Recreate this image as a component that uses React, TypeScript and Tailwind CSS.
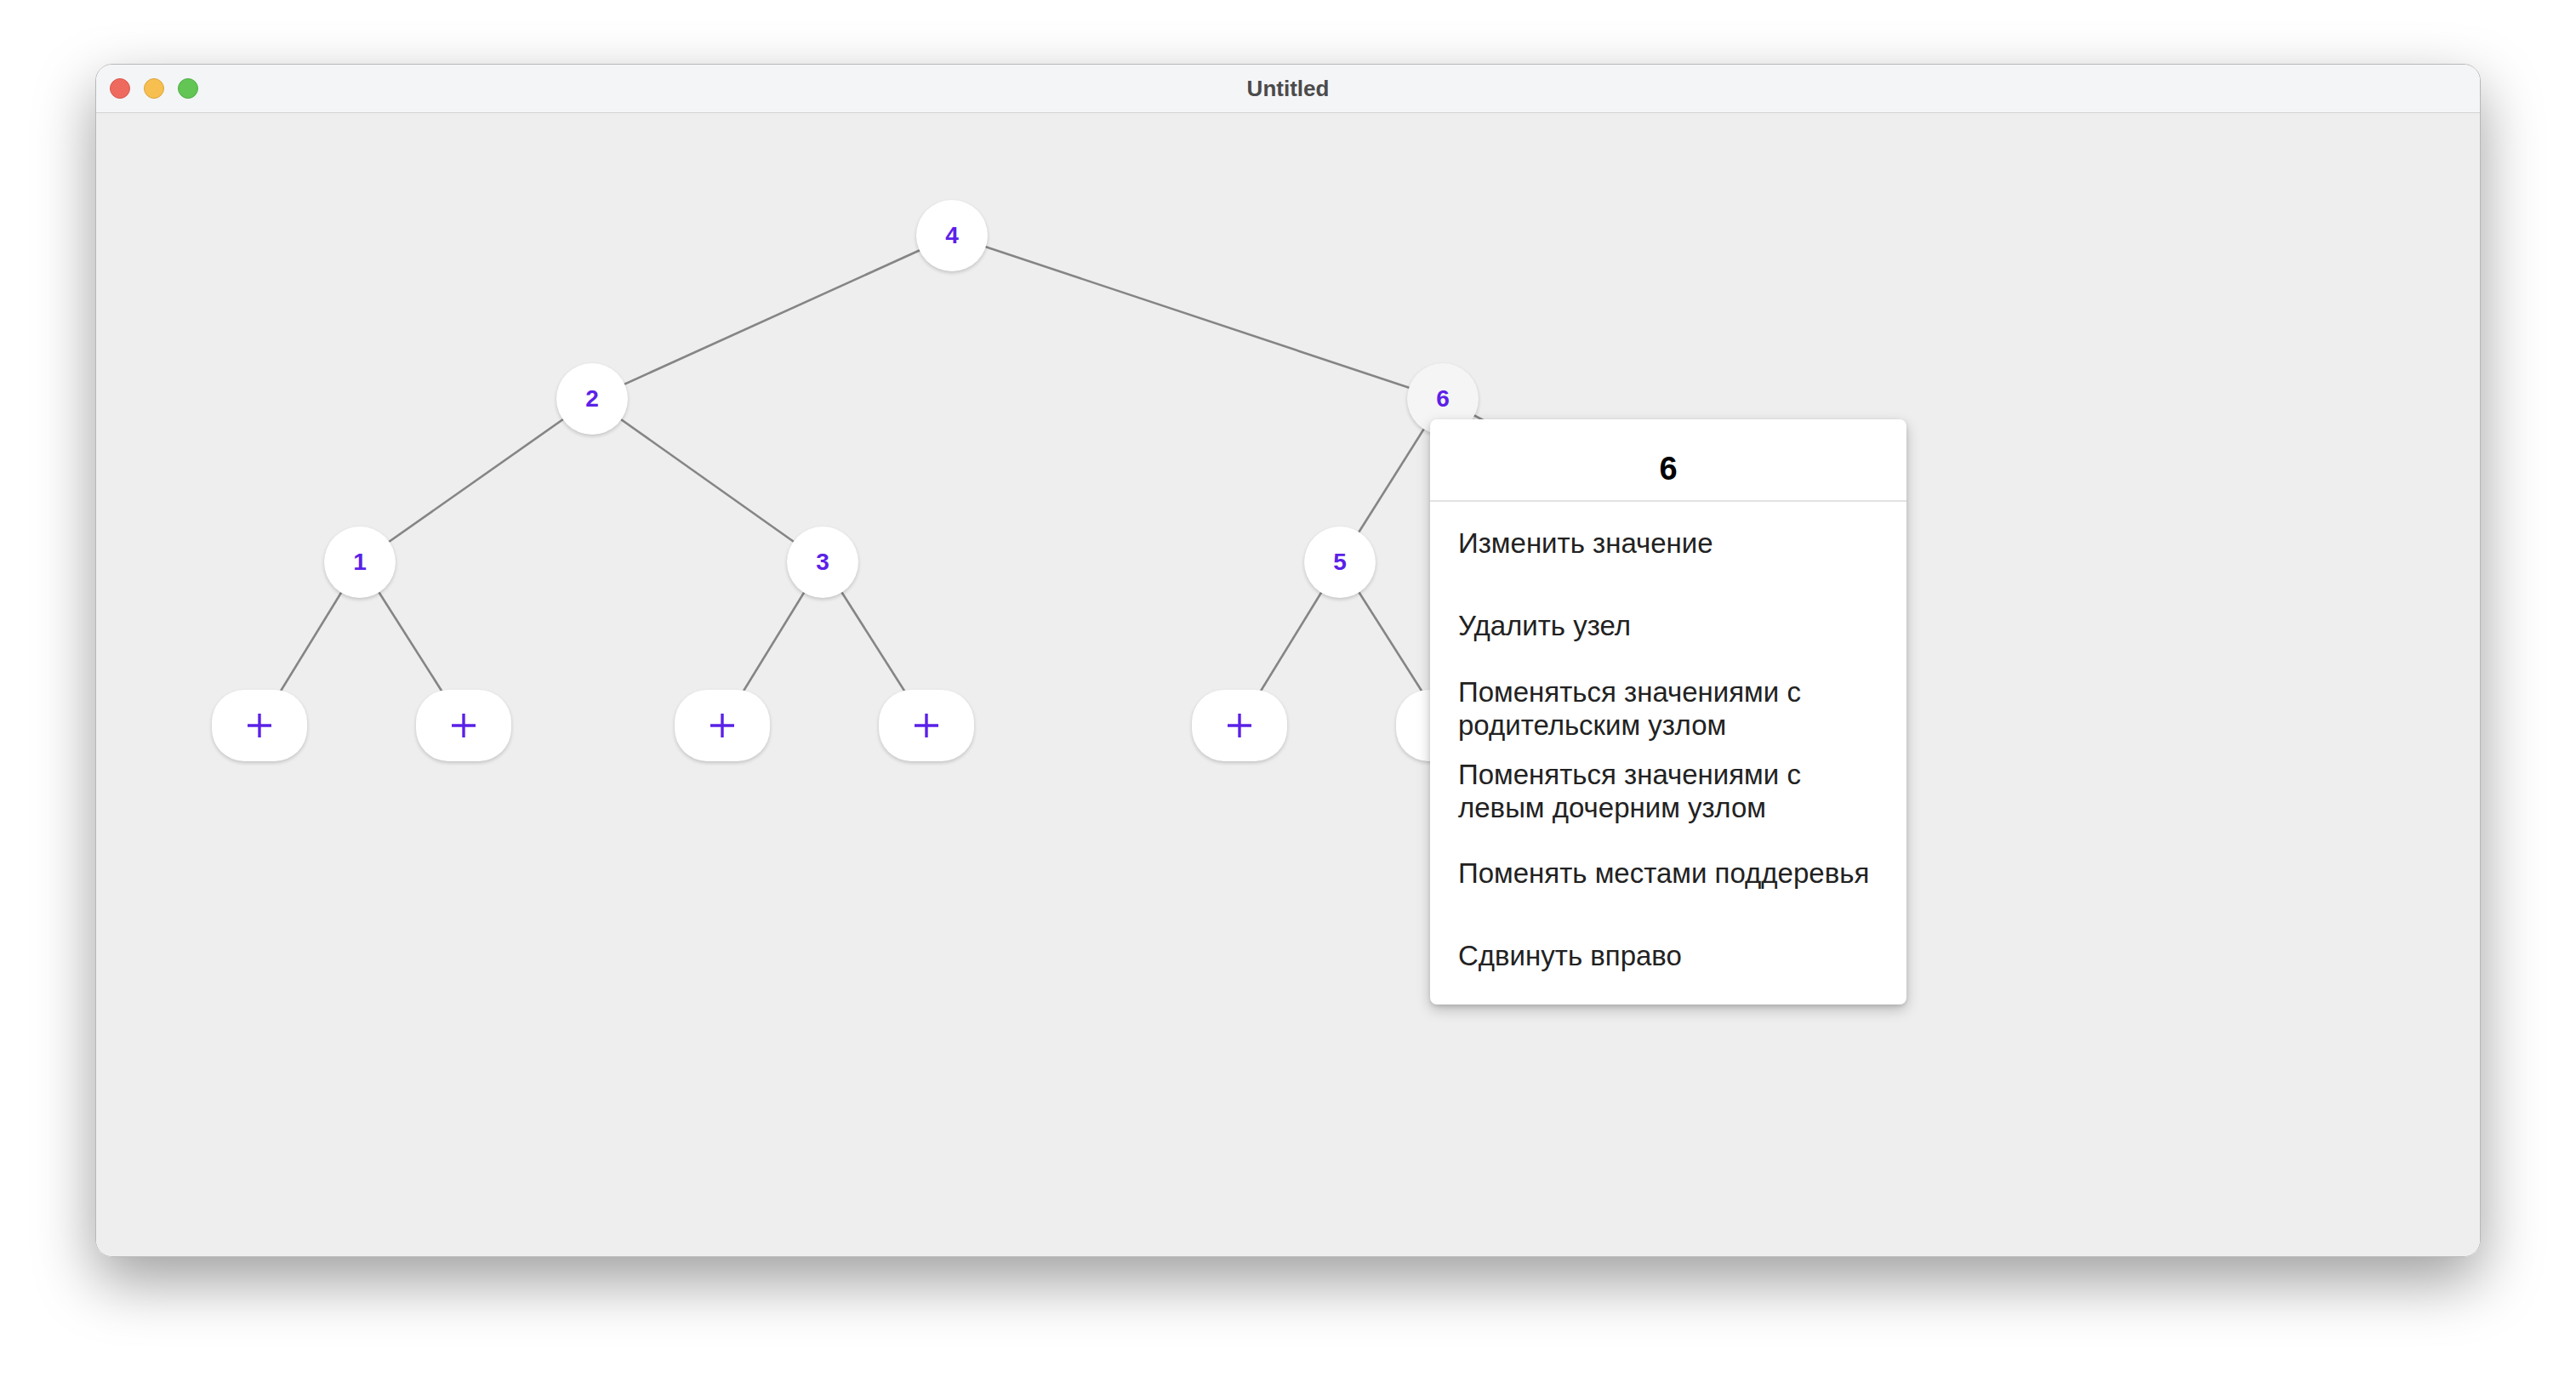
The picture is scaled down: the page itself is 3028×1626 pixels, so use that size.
import React from 'react';

type TreeNode = {
  id: string;
  x: number;
  y: number;
  label?: string;
  hovered?: boolean;
};

// coordinates are relative to the window content area
const OX = 112;
const OY = 132;

const nodes: TreeNode[] = [
  { id: 'n4', x: 1118, y: 276, label: '4' },
  { id: 'n2', x: 695, y: 468, label: '2' },
  { id: 'n6', x: 1695, y: 468, label: '6', hovered: true },
  { id: 'n1', x: 422, y: 660, label: '1' },
  { id: 'n3', x: 966, y: 660, label: '3' },
  { id: 'n5', x: 1574, y: 660, label: '5' },
  { id: 'p6r', x: 2060, y: 660 },
  { id: 'p1l', x: 304, y: 852 },
  { id: 'p1r', x: 544, y: 852 },
  { id: 'p3l', x: 848, y: 852 },
  { id: 'p3r', x: 1088, y: 852 },
  { id: 'p5l', x: 1456, y: 852 },
  { id: 'p5r', x: 1696, y: 852 },
];

const edges: [string, string][] = [
  ['n4', 'n2'],
  ['n4', 'n6'],
  ['n2', 'n1'],
  ['n2', 'n3'],
  ['n6', 'n5'],
  ['n6', 'p6r'],
  ['n1', 'p1l'],
  ['n1', 'p1r'],
  ['n3', 'p3l'],
  ['n3', 'p3r'],
  ['n5', 'p5l'],
  ['n5', 'p5r'],
];

const menuItems = [
  'Изменить значение',
  'Удалить узел',
  'Поменяться значениями с родительским узлом',
  'Поменяться значениями с левым дочерним узлом',
  'Поменять местами поддеревья',
  'Сдвинуть вправо',
];

const byId = (id: string) => nodes.find((n) => n.id === id)!;

function NodeCircle({ node }: { node: TreeNode }) {
  const left = node.x - OX;
  const top = node.y - OY;
  if (!node.label) {
    return (
      <button
        type="button"
        className="absolute w-[112px] h-[84px] -ml-[56px] -mt-[42px] rounded-[38px] bg-white shadow-[0_2px_4px_rgba(0,0,0,0.18)] flex items-center justify-center"
        style={{ left, top }}
      >
        <svg width="28" height="28" viewBox="0 0 28 28">
          <path d="M14 0V28M0 14H28" stroke="#5b21e8" strokeWidth="3.4" />
        </svg>
      </button>
    );
  }
  return (
    <div
      className={`absolute w-[84px] h-[84px] -ml-[42px] -mt-[42px] rounded-full shadow-[0_2px_4px_rgba(0,0,0,0.18)] flex items-center justify-center text-[28px] font-bold text-[#5b21e8] ${
        node.hovered ? 'bg-[#f5f5f5]' : 'bg-white'
      }`}
      style={{ left, top }}
    >
      {node.label}
    </div>
  );
}

export default function App() {
  return (
    <div
      className="w-[3028px] h-[1626px] bg-white pt-[75px] pl-[112px] overflow-hidden"
      style={{ fontFamily: '"Liberation Sans", Arial, sans-serif' }}
    >
      {/* Window */}
      <div className="w-[2804px] h-[1403px] rounded-[20px] overflow-hidden flex flex-col border border-[#b8b8b8] shadow-[0_28px_70px_rgba(0,0,0,0.38)]">
        {/* Title bar */}
        <div className="h-[57px] shrink-0 bg-[#f4f5f7] border-b border-[#d2d2d2] flex items-center relative">
          <div className="flex items-center gap-[16px] pl-[16px]">
            <span className="w-[24px] h-[24px] rounded-full bg-[#ee6a5f] border border-[#d8574d]" />
            <span className="w-[24px] h-[24px] rounded-full bg-[#f6bf4f] border border-[#dca43a]" />
            <span className="w-[24px] h-[24px] rounded-full bg-[#62c554] border border-[#4fae43]" />
          </div>
          <div className="absolute inset-0 flex items-center justify-center pointer-events-none">
            <span className="text-[26px] font-bold text-[#4b4b4b]">Untitled</span>
          </div>
        </div>

        {/* Canvas */}
        <div className="relative flex-1 bg-[#eeeeee]">
          <svg className="absolute inset-0" width="2804" height="1346">
            {edges.map(([a, b]) => {
              const na = byId(a);
              const nb = byId(b);
              return (
                <line
                  key={a + b}
                  x1={na.x - OX}
                  y1={na.y - OY}
                  x2={nb.x - OX}
                  y2={nb.y - OY}
                  stroke="#858585"
                  strokeWidth="2.6"
                />
              );
            })}
          </svg>

          {nodes.map((n) => (
            <NodeCircle key={n.id} node={n} />
          ))}

          {/* Context menu */}
          <div className="absolute left-[1568px] top-[360px] w-[560px] bg-white rounded-[8px] shadow-[0_6px_16px_rgba(0,0,0,0.22),0_2px_5px_rgba(0,0,0,0.12)] pb-[9px]">
            <div className="h-[97px] pt-[22px] flex items-center justify-center border-b-2 border-[#e2e2e2] text-[38px] font-bold text-black">
              6
            </div>
            <ul>
              {menuItems.map((item) => (
                <li
                  key={item}
                  className="h-[97px] flex items-center pl-[33px] pr-[40px] text-[33px] leading-[39px] text-[#222222]"
                >
                  {item}
                </li>
              ))}
            </ul>
          </div>
        </div>
      </div>
    </div>
  );
}
